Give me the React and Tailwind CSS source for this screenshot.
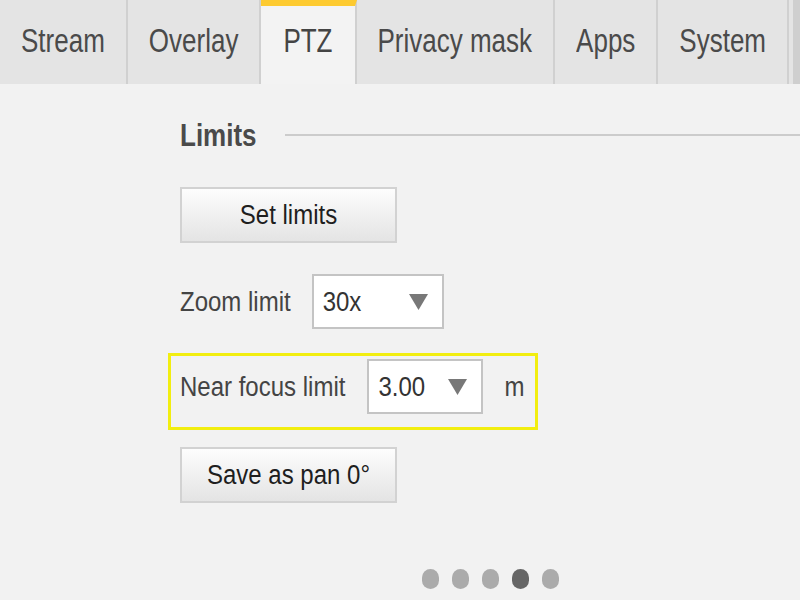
import React from 'react';

const tabs = ['Stream', 'Overlay', 'PTZ', 'Privacy mask', 'Apps', 'System'];

function Caret() {
  return (
    <svg width="19" height="16" viewBox="0 0 19 16">
      <polygon points="0,0 19,0 9.5,16" fill="#787878" />
    </svg>
  );
}

function Txt({ children, className = '' }) {
  return <span className={'inline-block scale-y-[1.15] ' + className}>{children}</span>;
}

function Select({ value, width }) {
  return (
    <div
      className="h-[55px] bg-white border-2 border-[#c4c4c4] flex items-center justify-between pl-[9px] pr-[14px] text-[24px] text-[#333]"
      style={{ width }}
    >
      <Txt>{value}</Txt>
      <Caret />
    </div>
  );
}

function Button({ children }) {
  return (
    <button className="w-[217px] h-[56px] border-2 border-[#d2d2d2] bg-gradient-to-b from-[#fdfdfd] to-[#e4e4e4] text-[24px] text-[#1e1e1e]">
      <Txt>{children}</Txt>
    </button>
  );
}

export default function App() {
  return (
    <div
      className="w-[800px] h-[600px] bg-[#f2f2f2] overflow-hidden flex flex-col"
      style={{ fontFamily: '"Liberation Sans", Arial, sans-serif' }}
    >
      <div className="h-[84px] bg-[#e4e4e4] flex shrink-0">
        {tabs.map((t) => {
          const active = t === 'PTZ';
          return (
            <div
              key={t}
              className={
                active
                  ? 'h-full flex items-center px-[22px] border-r-2 border-[#d0d0d0] bg-[#f3f3f3] border-t-[6px] border-t-[#fdca30] pb-[8px] text-[26px] text-[#444]'
                  : 'h-full flex items-center px-[21px] border-r-2 border-[#d0d0d0] pb-[2px] text-[26px] text-[#4a4a4a]'
              }
            >
              <span className="inline-block scale-y-[1.25]">{t}</span>
            </div>
          );
        })}
        <div className="flex-1" />
        <div className="w-[7px] h-full bg-[#cfcfcf]" />
      </div>

      <div className="flex flex-col pl-[180px]">
        <div className="mt-[36px] h-[30px] flex items-center">
          <span className="inline-block scale-y-[1.18] text-[26px] font-bold text-[#4a4a4a]">Limits</span>
          <div className="flex-1 h-[2px] bg-[#cccccc] ml-[28px]" />
        </div>

        <div className="mt-[37px]">
          <Button>Set limits</Button>
        </div>

        <div className="mt-[31px] flex items-center">
          <Txt className="text-[24px] text-[#444] mr-[21px]">Zoom limit</Txt>
          <Select value="30x" width={132} />
        </div>

        <div className="mt-[24px] -ml-[12px] w-[370px] h-[77px] border-[3px] border-[#f2ee10] pl-[9px] pt-[3px] flex items-start">
          <div className="h-[55px] flex items-center">
            <Txt className="text-[24px] text-[#444] mr-[22px]">Near focus limit</Txt>
            <Select value="3.00" width={116} />
            <Txt className="text-[24px] text-[#444] ml-[21px]">m</Txt>
          </div>
        </div>

        <div className="mt-[17px]">
          <Button>Save as pan 0°</Button>
        </div>

        <div className="mt-[66px] flex justify-center gap-[13px]">
          {[0, 1, 2, 3, 4].map((i) => (
            <div
              key={i}
              className={i === 3 ? 'w-[17px] h-[20px] rounded-full bg-[#666]' : 'w-[17px] h-[20px] rounded-full bg-[#ababab]'}
            />
          ))}
        </div>
      </div>
    </div>
  );
}
